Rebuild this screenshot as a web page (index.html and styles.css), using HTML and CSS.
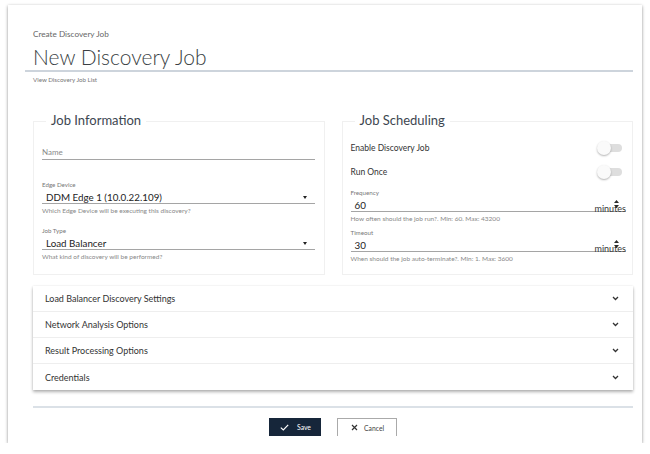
FILE: index.html
```html
<!DOCTYPE html>
<html lang="en">
<head>
  <meta charset="UTF-8" />
  <title>New Discovery Job</title>
  <link rel="stylesheet" href="styles.css">
</head>
<body>

  <div class="card">
    <div class="page-header">
      <div class="crumb">Create Discovery Job</div>
      <h1>New Discovery Job</h1>
    </div>
    <a class="back-link" href="#">View Discovery Job List</a>

    <div class="content">
      <div class="columns">

        <fieldset class="group group-info">
          <legend>Job Information</legend>

          <div class="field field-name">
            <div class="value placeholder">Name</div>
          </div>

          <div class="field field-edge">
            <label>Edge Device</label>
            <div class="value select">DDM Edge 1 (10.0.22.109)<span class="caret"></span></div>
            <div class="help">Which Edge Device will be executing this discovery?</div>
          </div>

          <div class="field field-type">
            <label>Job Type</label>
            <div class="value select">Load Balancer<span class="caret"></span></div>
            <div class="help">What kind of discovery will be performed?</div>
          </div>
        </fieldset>

        <fieldset class="group group-schedule">
          <legend>Job Scheduling</legend>

          <div class="switch-row">
            <span>Enable Discovery Job</span>
            <span class="toggle"></span>
          </div>
          <div class="switch-row">
            <span>Run Once</span>
            <span class="toggle"></span>
          </div>

          <div class="field field-freq">
            <label>Frequency</label>
            <div class="value number">60<span class="suffix">minutes<svg class="spin" width="5" height="8" viewBox="0 0 5 8"><path d="M2.5 0 L5 3 L0 3 Z M0 5 L5 5 L2.5 8 Z" fill="#2b2b2b"/></svg></span></div>
            <div class="help">How often should the job run?. Min: 60. Max: 43200</div>
          </div>

          <div class="field field-timeout">
            <label>Timeout</label>
            <div class="value number">30<span class="suffix">minutes<svg class="spin" width="5" height="8" viewBox="0 0 5 8"><path d="M2.5 0 L5 3 L0 3 Z M0 5 L5 5 L2.5 8 Z" fill="#2b2b2b"/></svg></span></div>
            <div class="help">When should the job auto-terminate?. Min: 1. Max: 3600</div>
          </div>
        </fieldset>

      </div>

      <div class="accordion">
        <div class="acc-row">Load Balancer Discovery Settings<svg class="chev" width="7" height="5" viewBox="0 0 7 5"><path d="M1 1 L3.5 3.5 L6 1" fill="none" stroke="#333" stroke-width="1.3"/></svg></div>
        <div class="acc-row">Network Analysis Options<svg class="chev" width="7" height="5" viewBox="0 0 7 5"><path d="M1 1 L3.5 3.5 L6 1" fill="none" stroke="#333" stroke-width="1.3"/></svg></div>
        <div class="acc-row">Result Processing Options<svg class="chev" width="7" height="5" viewBox="0 0 7 5"><path d="M1 1 L3.5 3.5 L6 1" fill="none" stroke="#333" stroke-width="1.3"/></svg></div>
        <div class="acc-row">Credentials<svg class="chev" width="7" height="5" viewBox="0 0 7 5"><path d="M1 1 L3.5 3.5 L6 1" fill="none" stroke="#333" stroke-width="1.3"/></svg></div>
      </div>

      <div class="divider"></div>

      <div class="actions">
        <button class="btn btn-save">
          <svg width="9" height="7" viewBox="0 0 9 7"><path d="M0.8 3.6 L3.3 6 L8.2 0.8" fill="none" stroke="#fff" stroke-width="1.2"/></svg>
          Save
        </button>
        <button class="btn btn-cancel">
          <svg width="7" height="7" viewBox="0 0 7 7"><path d="M1 1 L6 6 M6 1 L1 6" fill="none" stroke="#333" stroke-width="1.2"/></svg>
          Cancel
        </button>
      </div>
    </div>
  </div>

</body>
</html>
```

FILE: styles.css
```css
body {
  margin: 0;
  background: #fff;
  font-family: Lato, "Open Sans", sans-serif;
  color: #333;
}
.card {
  margin: 5px 8px 0;
  height: 438px;
  box-sizing: border-box;
  padding: 24px 9px 0 17px;
  background: #fff;
  box-shadow: 0 1px 3px rgba(0, 0, 0, 0.45);
}
.page-header {
  padding: 0 0 1px 8px;
  border-bottom: 2px solid #cdd4dc;
}
.crumb {
  font-size: 8.2px;
  line-height: 10px;
  color: #666;
}
h1 {
  margin: 6px 0 0;
  font-size: 21px;
  line-height: 24px;
  font-weight: 300;
  color: #3a3f44;
}
.back-link {
  display: block;
  margin: 4px 0 0 8px;
  font-size: 6.2px;
  line-height: 8px;
  color: #777;
  text-decoration: none;
}
.content {
  padding-left: 8px;
}
.columns {
  display: grid;
  grid-template-columns: 1fr 1fr;
  gap: 17px;
  margin-top: 28px;
}
.group {
  margin: 0;
  min-width: 0;
  border: 1px solid #f0f0f0;
  padding: 0 9px 11px 8px;
}
.group-schedule {
  padding-right: 6px;
}
legend {
  margin-left: 4px;
  padding: 0 5px 3px;
  font-size: 13px;
  line-height: 16px;
  color: #3d4650;
}
.field label {
  display: block;
  font-size: 6.2px;
  line-height: 8px;
  color: #777;
}
.value {
  display: flex;
  align-items: center;
  justify-content: space-between;
  margin-top: 2px;
  padding-left: 4px;
  font-size: 9.8px;
  line-height: 12px;
  color: #222;
  border-bottom: 1px solid #a5a5a5;
}
.placeholder {
  padding-left: 0;
  padding-bottom: 1px;
  font-size: 8px;
  color: #8a8a8a;
}
.help {
  margin-top: 3px;
  font-size: 6.5px;
  line-height: 8px;
  color: #888;
}
.field-name {
  margin-top: 15px;
}
.field-edge {
  margin-top: 21px;
}
.field-type {
  margin-top: 12px;
}
.caret {
  margin-right: 8px;
  border-left: 2.5px solid transparent;
  border-right: 2.5px solid transparent;
  border-top: 3px solid #222;
}
.switch-row {
  display: flex;
  align-items: center;
  justify-content: space-between;
  height: 24px;
  font-size: 8.5px;
  color: #333;
}
.switch-row:first-of-type {
  margin-top: 5px;
}
.toggle {
  position: relative;
  width: 26px;
  height: 14px;
  margin-right: 3px;
}
.toggle::before {
  content: "";
  position: absolute;
  left: 6px;
  top: 3px;
  width: 19px;
  height: 8px;
  border-radius: 4px;
  background: #dedede;
}
.toggle::after {
  content: "";
  position: absolute;
  left: 0;
  top: 0;
  width: 14px;
  height: 14px;
  border-radius: 50%;
  background: #fafafa;
  box-shadow: 0 1px 2px rgba(0, 0, 0, 0.3);
}
.field-freq {
  margin-top: 5px;
}
.field-timeout {
  margin-top: 6px;
}
.number {
  align-items: flex-end;
}
.suffix {
  position: relative;
  font-size: 9px;
  line-height: 10px;
  margin-bottom: -3px;
  color: #333;
}
.spin {
  position: absolute;
  right: 7px;
  top: -4px;
}
.accordion {
  margin-top: 11px;
  background: #fff;
  box-shadow: 0 2px 3px rgba(0, 0, 0, 0.3), 0 0 2px rgba(0, 0, 0, 0.08);
}
.acc-row {
  display: flex;
  align-items: center;
  justify-content: space-between;
  height: 25px;
  padding: 0 14px 0 12px;
  font-size: 9px;
  color: #333;
  border-bottom: 1px solid #eee;
}
.acc-row:last-child {
  height: 26px;
  border-bottom: none;
}
.divider {
  margin-top: 16px;
  border-top: 2px solid #dbe1e7;
}
.actions {
  display: flex;
  justify-content: center;
  gap: 16px;
  margin-top: 10px;
}
.btn {
  display: flex;
  align-items: center;
  height: 18px;
  box-sizing: border-box;
  padding: 0 0 0 11px;
  gap: 8px;
  font-family: Lato, "Open Sans", sans-serif;
  font-size: 6.8px;
  cursor: pointer;
}
.btn-save {
  width: 52px;
  border: none;
  background: #16263a;
  color: #fff;
}
.btn-cancel {
  width: 60px;
  padding-left: 13px;
  gap: 6px;
  border: 1px solid #aaa;
  border-bottom: none;
  background: #fff;
  color: #444;
}
```
